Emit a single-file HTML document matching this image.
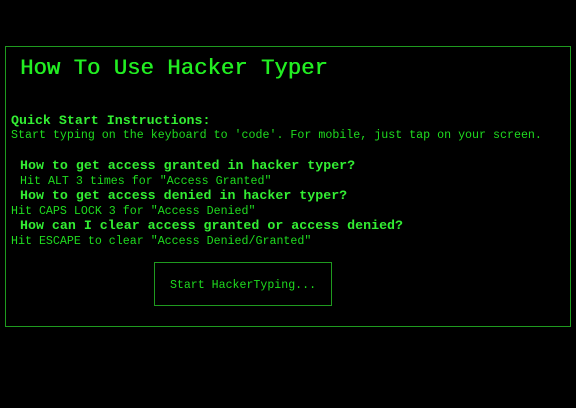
<!DOCTYPE html>
<html><head><style>
body{margin:0;background:#000;width:576px;height:408px;overflow:hidden;font-family:"Liberation Mono",monospace;color:#1fdc1f;}
.box{position:absolute;left:5px;top:46px;width:564px;height:279px;border:1px solid #1f9a1f;}
.t{position:absolute;white-space:pre;}
h1{position:absolute;left:14px;top:8px;margin:0;font-family:"Liberation Mono",monospace;font-size:22.3px;font-weight:normal;color:#22ee22;text-shadow:0.5px 0 0 #22ee22;}
.b{font-weight:bold;font-size:13.3px;color:#33ee33;}
.s{font-size:11.65px;}
.btn{position:absolute;left:148px;top:215px;width:176px;height:42px;border:1px solid #1f9a1f;font-size:11.6px;line-height:46px;text-align:center;}
</style></head><body>
<div class="box">
<h1>How To Use Hacker Typer</h1>
<div class="t b" style="left:5px;top:66px;">Quick Start Instructions:</div>
<div class="t s" style="left:5px;top:82px;">Start typing on the keyboard to 'code'. For mobile, just tap on your screen.</div>
<div class="t b" style="left:14px;top:111px;">How to get access granted in hacker typer?</div>
<div class="t s" style="left:14px;top:128px;">Hit ALT 3 times for "Access Granted"</div>
<div class="t b" style="left:14px;top:141px;">How to get access denied in hacker typer?</div>
<div class="t s" style="left:5px;top:158px;">Hit CAPS LOCK 3 for "Access Denied"</div>
<div class="t b" style="left:14px;top:171px;">How can I clear access granted or access denied?</div>
<div class="t s" style="left:5px;top:188px;">Hit ESCAPE to clear "Access Denied/Granted"</div>
<div class="btn">Start HackerTyping...</div>
</div>
</body></html>
